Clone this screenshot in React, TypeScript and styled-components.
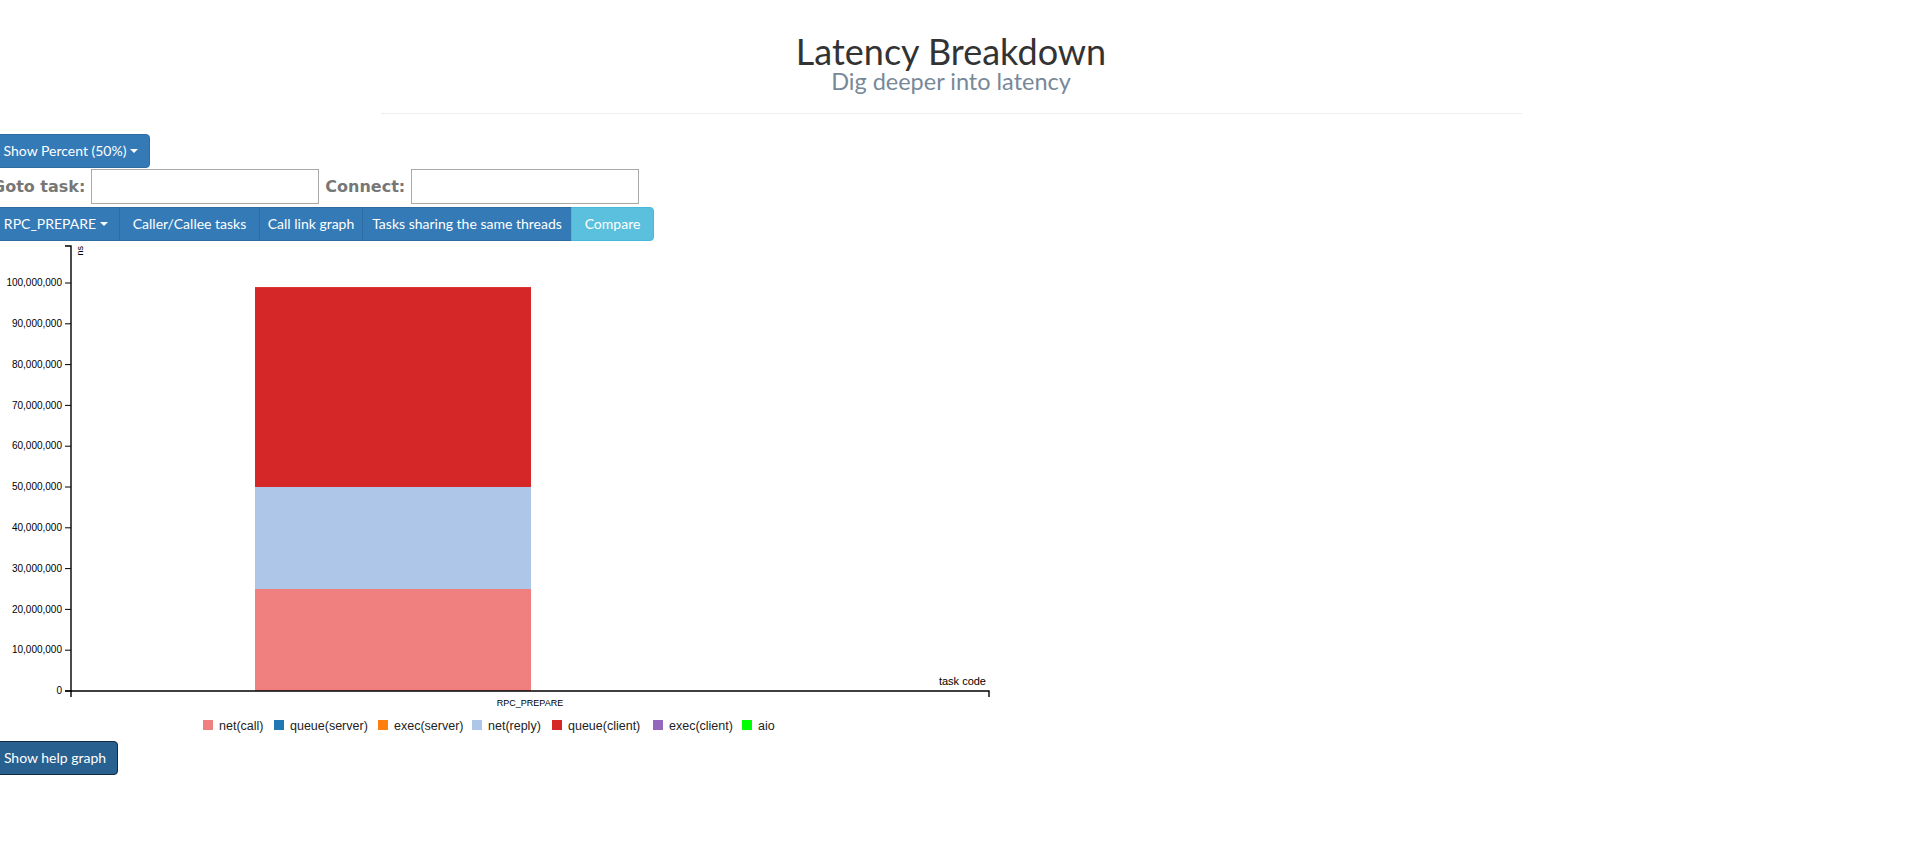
import React from "react";
import styled, { createGlobalStyle, css } from "styled-components";

const GlobalStyle = createGlobalStyle`
  html, body { margin: 0; padding: 0; background: #fff; }
  body { font-family: Lato, "Open Sans", sans-serif; color: #333; overflow: hidden; }
  * { box-sizing: border-box; }
`;

const PageHeader = styled.header`
  width: 1141px;
  margin: 32px 0 0 calc(50% - 575px);
  padding-bottom: 20px;
  border-bottom: 1px solid #eee;
  text-align: center;
`;

const Title = styled.h1`
  margin: 0;
  font-family: Lato, sans-serif;
  font-weight: 400;
  font-size: 36px;
  line-height: 38px;
  color: #333;
`;

const Subtitle = styled.div`
  font-family: Lato, sans-serif;
  font-size: 23.5px;
  line-height: 23px;
  color: #778899;
`;

const Controls = styled.main`
  margin: 20px 0 0 -8px;
  display: flex;
  flex-direction: column;
  align-items: flex-start;
`;

type Variant = "primary" | "info" | "pressed";

const palette: Record<Variant, { bg: string; border: string }> = {
  primary: { bg: "#337ab7", border: "#2e6da4" },
  info: { bg: "#5bc0de", border: "#46b8da" },
  pressed: { bg: "#286090", border: "#122b40" },
};

const Button = styled.button<{ $variant?: Variant; $grouped?: boolean; $width?: number }>`
  display: inline-flex;
  align-items: center;
  justify-content: center;
  height: 34px;
  padding: 6px 12px;
  font-family: Lato, sans-serif;
  font-size: 14px;
  line-height: 20px;
  color: #fff;
  white-space: nowrap;
  cursor: pointer;
  border-radius: 4px;
  ${({ $width }) => $width && css`width: ${$width}px; padding: 6px 0;`}
  ${({ $variant = "primary" }) => css`
    background: ${palette[$variant].bg};
    border: 1px solid ${palette[$variant].border};
  `}
  ${({ $grouped }) =>
    $grouped &&
    css`
      border-radius: 0;
      margin-left: -1px;
      &:first-child { margin-left: 0; border-radius: 4px 0 0 4px; }
      &:last-child { border-radius: 0 4px 4px 0; }
    `}
`;

const Caret = styled.span`
  display: inline-block;
  width: 0;
  height: 0;
  margin-left: 4px;
  border-top: 4px solid #fff;
  border-left: 4px solid transparent;
  border-right: 4px solid transparent;
`;

const FieldRow = styled.div`
  display: flex;
  align-items: center;
  margin-top: 1px;
  height: 35px;
`;

const FieldLabel = styled.label`
  font-family: "DejaVu Sans", Verdana, sans-serif;
  font-weight: bold;
  font-size: 16px;
  color: #777;
  margin-right: 6px;
`;

const TextInput = styled.input`
  width: 228px;
  height: 35px;
  border: 1px solid #a9a9a9;
  margin-right: 6px;
  padding: 2px 4px;
  font-size: 14px;
`;

const ButtonGroup = styled.div`
  display: flex;
  margin-top: 3px;
`;

const ChartBox = styled.div`
  margin-left: 8px;
  width: 1000px;
  height: 495px;
`;

const HelpButtonRow = styled.div`
  margin-top: 5px;
`;

const ORIGIN_Y = 450;
const PER_10M = 40.8;
const yv = (v: number) => ORIGIN_Y - (v / 1e7) * PER_10M;
const fmt = (v: number) => v.toLocaleString("en-US");

const ticks = Array.from({ length: 11 }, (_, i) => i * 1e7);

const segments = [
  { from: 0, to: 25e6, color: "#f08080" },
  { from: 25e6, to: 50e6, color: "#aec7e8" },
  { from: 50e6, to: 99e6, color: "#d62728" },
];

const legend = [
  { x: 203, label: "net(call)", color: "#f08080" },
  { x: 274, label: "queue(server)", color: "#1f77b4" },
  { x: 378, label: "exec(server)", color: "#ff7f0e" },
  { x: 472, label: "net(reply)", color: "#aec7e8" },
  { x: 552, label: "queue(client)", color: "#d62728" },
  { x: 653, label: "exec(client)", color: "#9467bd" },
  { x: 742, label: "aio", color: "#00ff00" },
];

const AXIS_X = 71;
const AXIS_END = 989;

function Chart() {
  return (
    <svg width={1000} height={495} style={{ display: "block" }}>
      <g fontFamily='"Liberation Sans", Arial, sans-serif' fontSize={10} fill="#000">
        {segments.map((s) => (
          <rect
            key={s.color}
            x={255}
            y={yv(s.to)}
            width={276}
            height={yv(s.from) - yv(s.to)}
            fill={s.color}
          />
        ))}
        <path d={`M${AXIS_X - 6},5H${AXIS_X}V${ORIGIN_Y}H${AXIS_X - 6}`} fill="none" stroke="#000" strokeWidth={1.4} />
        {ticks.map((t) => (
          <g key={t}>
            <line x1={AXIS_X - 6} x2={AXIS_X} y1={yv(t)} y2={yv(t)} stroke="#000" strokeWidth={1} />
            <text x={AXIS_X - 9} y={yv(t)} dy="0.32em" textAnchor="end">
              {fmt(t)}
            </text>
          </g>
        ))}
        <text transform={`translate(${AXIS_X},5) rotate(-90)`} y={6} dy="0.71em" textAnchor="end" fontSize={9}>
          ns
        </text>
        <path d={`M${AXIS_X},${ORIGIN_Y + 6}V${ORIGIN_Y}H${AXIS_END}V${ORIGIN_Y + 6}`} fill="none" stroke="#000" strokeWidth={1.4} />
        <text x={530} y={ORIGIN_Y + 9} dy="0.71em" textAnchor="middle" fontSize={9}>
          RPC_PREPARE
        </text>
        <text x={986} y={ORIGIN_Y - 6} textAnchor="end" fontSize={11}>
          task code
        </text>
        {legend.map((l) => (
          <g key={l.label}>
            <rect x={l.x} y={479} width={10} height={10} fill={l.color} />
            <text x={l.x + 16} y={488.5} fontSize={12.5} fill="#222">
              {l.label}
            </text>
          </g>
        ))}
      </g>
    </svg>
  );
}

export default function App() {
  return (
    <>
      <GlobalStyle />
      <PageHeader>
        <Title>Latency Breakdown</Title>
        <Subtitle>Dig deeper into latency</Subtitle>
      </PageHeader>
      <Controls>
        <Button $variant="primary" $width={158}>
          Show Percent (50%)
          <Caret />
        </Button>
        <FieldRow>
          <FieldLabel>Goto task:</FieldLabel>
          <TextInput />
          <FieldLabel>Connect:</FieldLabel>
          <TextInput />
        </FieldRow>
        <ButtonGroup>
          <Button $grouped $width={128}>
            RPC_PREPARE
            <Caret />
          </Button>
          <Button $grouped $width={141}>Caller/Callee tasks</Button>
          <Button $grouped $width={104}>Call link graph</Button>
          <Button $grouped $width={210}>Tasks sharing the same threads</Button>
          <Button $grouped $variant="info" $width={83}>Compare</Button>
        </ButtonGroup>
        <ChartBox>
          <Chart />
        </ChartBox>
        <HelpButtonRow>
          <Button $variant="pressed" $width={126}>Show help graph</Button>
        </HelpButtonRow>
      </Controls>
    </>
  );
}
